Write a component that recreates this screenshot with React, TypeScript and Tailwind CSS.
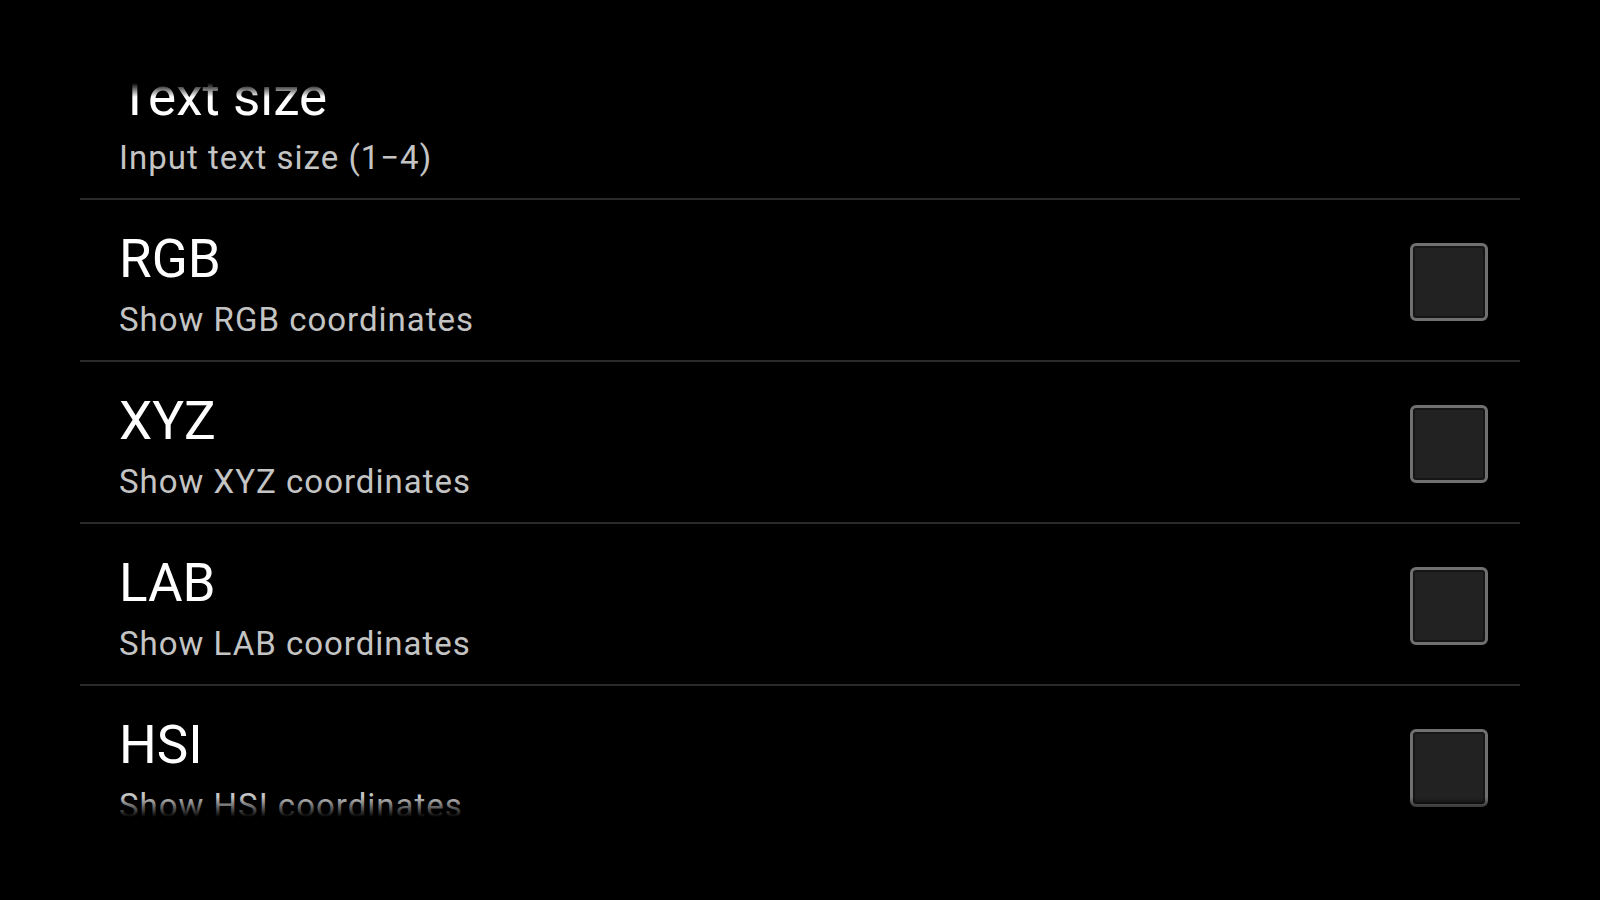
import React from 'react';

type Pref = {
  title: string;
  summary: string;
  checkbox?: boolean;
};

const prefs: Pref[] = [
  { title: 'Text size', summary: 'Input text size (1\u22124)' },
  { title: 'RGB', summary: 'Show RGB coordinates', checkbox: true },
  { title: 'XYZ', summary: 'Show XYZ coordinates', checkbox: true },
  { title: 'LAB', summary: 'Show LAB coordinates', checkbox: true },
  { title: 'HSI', summary: 'Show HSI coordinates', checkbox: true },
];

function CheckBox() {
  return (
    <div className="mt-[4px] h-[78px] w-[78px] shrink-0 self-center rounded-[6px] border-[3px] border-[#707070] bg-[#222222] shadow-[inset_0_0_0_2px_#161616]" />
  );
}

function PrefRow({ pref }: { pref: Pref }) {
  return (
    <div className="flex h-[160px] items-start pl-[39px] pr-[32px]">
      <div className="flex flex-1 flex-col pt-[28px]">
        <span className="text-[53px] leading-[62px] text-white">{pref.title}</span>
        <span className="mt-[11px] text-[33px] leading-[37px] tracking-[1px] text-[#c4c4c4]">{pref.summary}</span>
      </div>
      {pref.checkbox && <CheckBox />}
    </div>
  );
}

export default function App() {
  return (
    <div className="h-[900px] w-full bg-black pt-[83px]" style={{ fontFamily: 'Roboto, "Noto Sans", sans-serif' }}>
      {/* list scrolled a little, edges fade out */}
      <div className="relative mx-[80px] h-[734px] overflow-hidden">
        <div className="-mt-[45px] flex flex-col">
          {prefs.map((p, i) => (
            <React.Fragment key={p.title}>
              {i > 0 && <div className="h-[2px] bg-[#2a2a2a]" />}
              <PrefRow pref={p} />
            </React.Fragment>
          ))}
        </div>
        <div className="pointer-events-none absolute inset-x-0 top-0 h-[14px] bg-gradient-to-b from-black to-transparent" />
        <div className="pointer-events-none absolute inset-x-0 bottom-0 h-[20px] bg-gradient-to-t from-black to-transparent" />
      </div>
    </div>
  );
}
